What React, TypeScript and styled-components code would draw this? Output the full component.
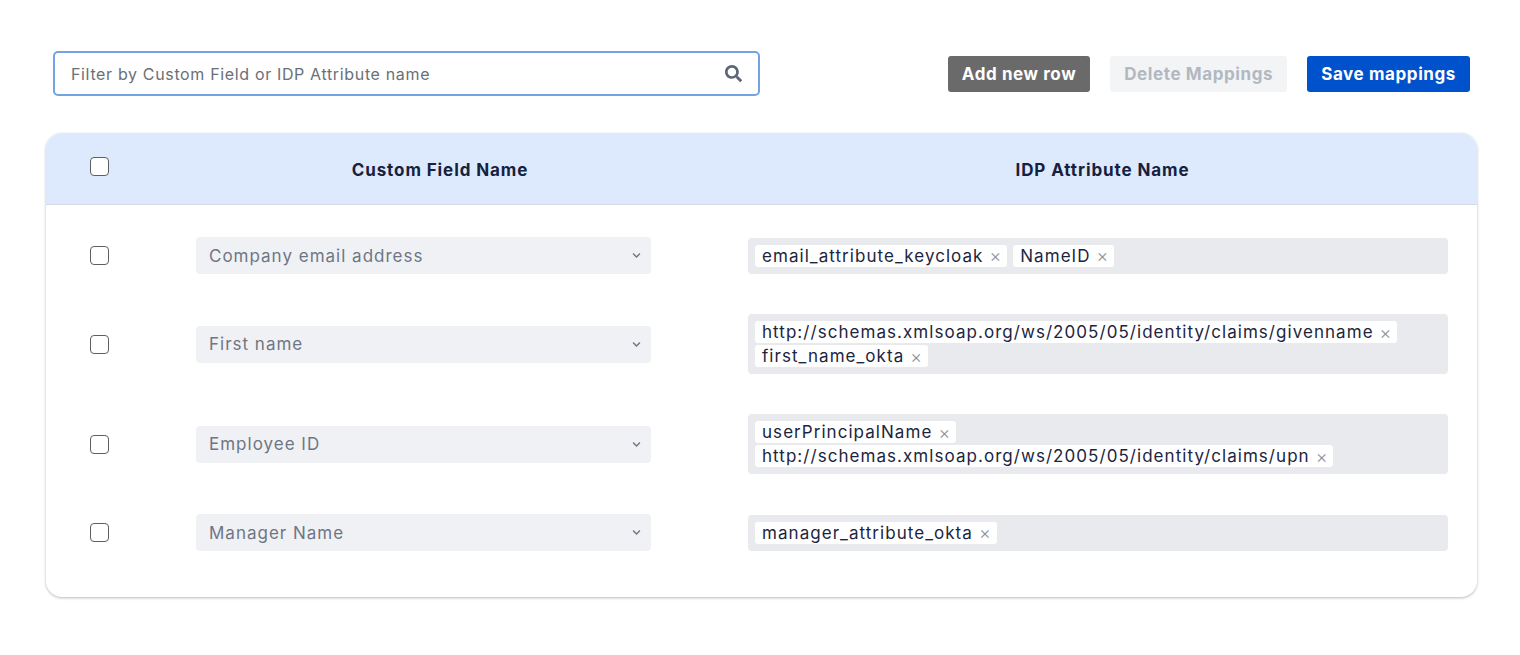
import React from 'react';
import styled, { createGlobalStyle } from 'styled-components';
import { FaSearch, FaChevronDown } from 'react-icons/fa';

const GlobalStyle = createGlobalStyle`
  body {
    margin: 0;
    background: #ffffff;
    font-family: 'Inter', 'Open Sans', sans-serif;
    color: #1b2540;
  }
`;

const Page = styled.div`
  padding: 51px 43px 40px 46px;
`;

const Toolbar = styled.div`
  display: flex;
  align-items: center;
  justify-content: space-between;
  padding: 0 7px;
`;

const SearchBox = styled.div`
  width: 707px;
  height: 45px;
  box-sizing: border-box;
  border: 2px solid #74a3e4;
  border-radius: 5px;
  display: flex;
  align-items: center;
  padding: 0 16px 0 14px;
  color: #5c6675;
`;

const SearchInput = styled.input`
  flex: 1;
  border: none;
  outline: none;
  background: transparent;
  font-family: inherit;
  font-size: 16px;
  letter-spacing: 0.65px;
  color: #1b2540;
  &::placeholder {
    color: #6b6f76;
  }
`;

const Actions = styled.div`
  display: flex;
  gap: 20px;
`;

const Button = styled.button<{ variant: 'dark' | 'disabled' | 'primary' }>`
  height: 36px;
  padding: 0 14px;
  border: none;
  border-radius: 3px;
  font-family: inherit;
  font-size: 17px;
  font-weight: 700;
  letter-spacing: 0.6px;
  background: ${(p) =>
    p.variant === 'dark' ? '#6a6a6a' : p.variant === 'primary' ? '#0052cc' : '#f3f4f6'};
  color: ${(p) => (p.variant === 'disabled' ? '#b2b8c2' : '#ffffff')};
`;

const Card = styled.div`
  margin-top: 37px;
  border-radius: 16px;
  overflow: hidden;
  box-shadow: 0 1px 3px rgba(0, 0, 0, 0.28);
`;

const Grid = styled.div`
  display: grid;
  grid-template-columns: 106px 576px 1fr;
  align-items: center;
`;

const HeaderRow = styled(Grid)`
  height: 71px;
  background: #dde9fc;
  border-bottom: 1px solid #d4dbe6;
`;

const HeaderCell = styled.div`
  text-align: center;
  font-size: 17px;
  font-weight: 700;
  letter-spacing: 0.9px;
  color: #16213e;
  padding-top: 2px;
`;

const Body = styled.div`
  padding: 12px 0 26px;
`;

const Row = styled(Grid)`
  padding: 20px 0;
`;

const CheckCell = styled.div<{ lift?: boolean }>`
  display: flex;
  justify-content: center;
  margin-bottom: ${(p) => (p.lift ? '5px' : '0')};
`;

const Checkbox = styled.input.attrs({ type: 'checkbox' })`
  appearance: none;
  margin: 0;
  width: 19px;
  height: 19px;
  border: 1.5px solid #5f5f5f;
  border-radius: 4px;
  background: #fff;
`;

const SelectCell = styled.div`
  padding-left: 44px;
  padding-right: 77px;
`;

const Select = styled.div`
  height: 37px;
  background: #f0f1f4;
  border-radius: 4px;
  display: flex;
  align-items: center;
  justify-content: space-between;
  padding: 0 10px 0 13px;
  font-size: 17px;
  letter-spacing: 1px;
  color: #6e7684;
`;

const TagCell = styled.div`
  padding-left: 20px;
  padding-right: 29px;
`;

const TagBox = styled.div`
  background: #e9eaee;
  border-radius: 4px;
  padding: 7px 7px;
  display: flex;
  flex-wrap: wrap;
  gap: 2px 6px;
  min-height: 22px;
`;

const Tag = styled.span`
  display: inline-flex;
  align-items: center;
  gap: 6px;
  height: 22px;
  background: #ffffff;
  border-radius: 3px;
  padding: 0 6px 0 7px;
  font-size: 17px;
  letter-spacing: 1.05px;
  color: #1b2540;
  white-space: nowrap;
`;

const Remove = styled.span`
  color: #8c929c;
  font-size: 18px;
  font-weight: 300;
  letter-spacing: 0;
`;

interface Mapping {
  field: string;
  attributes: string[];
}

const mappings: Mapping[] = [
  { field: 'Company email address', attributes: ['email_attribute_keycloak', 'NameID'] },
  {
    field: 'First name',
    attributes: ['http://schemas.xmlsoap.org/ws/2005/05/identity/claims/givenname', 'first_name_okta'],
  },
  {
    field: 'Employee ID',
    attributes: ['userPrincipalName', 'http://schemas.xmlsoap.org/ws/2005/05/identity/claims/upn'],
  },
  { field: 'Manager Name', attributes: ['manager_attribute_okta'] },
];

function App() {
  return (
    <Page>
      <GlobalStyle />
      <Toolbar>
        <SearchBox>
          <SearchInput placeholder='Filter by Custom Field or IDP Attribute name' />
          <FaSearch size={17} />
        </SearchBox>
        <Actions>
          <Button variant='dark'>Add new row</Button>
          <Button variant='disabled'>Delete Mappings</Button>
          <Button variant='primary'>Save mappings</Button>
        </Actions>
      </Toolbar>
      <Card>
        <HeaderRow>
          <CheckCell lift>
            <Checkbox />
          </CheckCell>
          <HeaderCell>Custom Field Name</HeaderCell>
          <HeaderCell>IDP Attribute Name</HeaderCell>
        </HeaderRow>
        <Body>
          {mappings.map((m) => (
            <Row key={m.field}>
              <CheckCell>
                <Checkbox />
              </CheckCell>
              <SelectCell>
                <Select>
                  <span>{m.field}</span>
                  <FaChevronDown size={9} color='#6e7684' />
                </Select>
              </SelectCell>
              <TagCell>
                <TagBox>
                  {m.attributes.map((a) => (
                    <Tag key={a}>
                      {a}
                      <Remove>×</Remove>
                    </Tag>
                  ))}
                </TagBox>
              </TagCell>
            </Row>
          ))}
        </Body>
      </Card>
    </Page>
  );
}

export default App;
